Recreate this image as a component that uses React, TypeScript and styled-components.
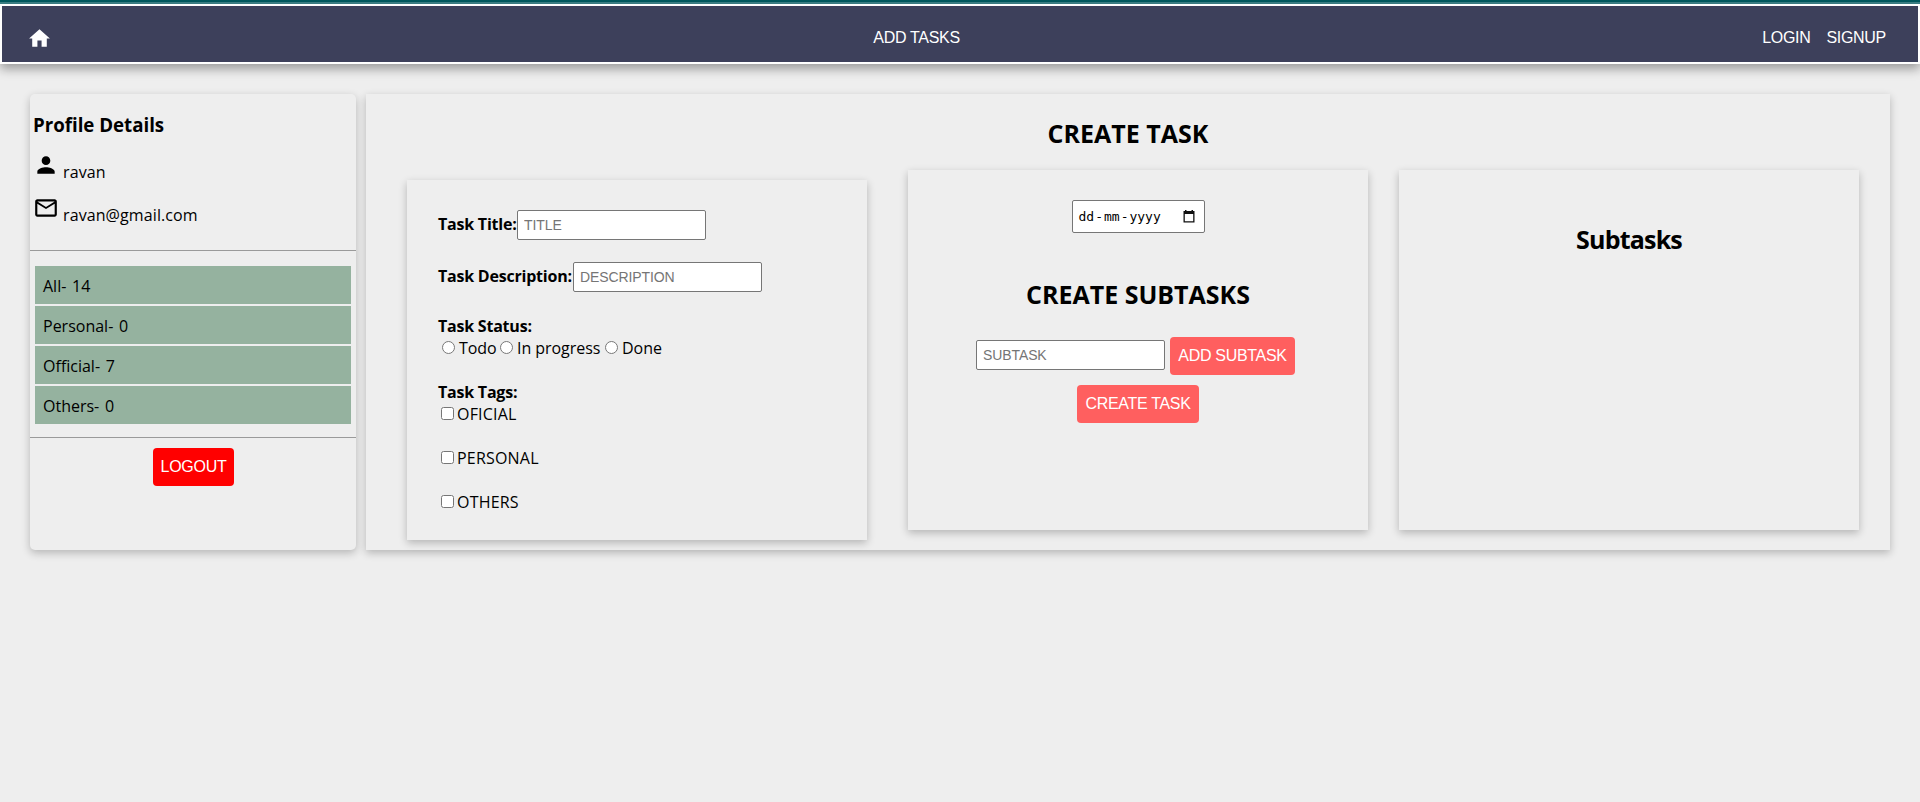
import React from "react";
import styled, { createGlobalStyle, css } from "styled-components";
import { MdHome, MdPerson, MdMailOutline } from "react-icons/md";

const Global = createGlobalStyle`
  * { box-sizing: border-box; }
  body {
    margin: 0;
    min-height: 100vh;
    background: #eeeeee;
    color: #000;
    font-family: "Open Sans", "Noto Sans", sans-serif;
    font-size: 16px;
    font-weight: 400;
    line-height: 22px;
  }
`;

const arial = css`
  font-family: "Liberation Sans", Arial, sans-serif;
  font-weight: 400;
`;

const elevation = css`
  box-shadow: rgba(0, 0, 0, 0.24) 0 3px 8px;
`;

const TopStrip = styled.div`
  height: 4px;
  background: #005a5f;
  border-bottom: 2px solid #3d8287;
`;

const NavBar = styled.nav`
  ${arial}
  display: flex;
  justify-content: space-between;
  align-items: flex-start;
  height: 60px;
  padding: 20px 32px 0 25px;
  border: 2px solid #fff;
  background: #3d405b;
  color: #fff;
  font-size: 16px;
  line-height: 24px;
  letter-spacing: -0.3px;
  box-shadow: rgba(0, 0, 0, 0.35) 0 5px 10px;
`;

const HomeLink = styled.span`
  width: 44px;
  height: 25px;
  svg { display: block; }
`;

const NavLink = styled.span`
  color: #fff;
`;

const NavGroup = styled.div`
  display: flex;
  gap: 16px;
`;

const Page = styled.main`
  display: flex;
  gap: 10px;
  padding: 30px 30px 0;
`;

const Sidebar = styled.aside`
  ${elevation}
  display: flex;
  flex-direction: column;
  width: 326px;
  height: 456px;
  padding-top: 18px;
  border-radius: 5px;
`;

const SidebarTitle = styled.h3`
  margin: 0 0 15px 3px;
  font-size: 18.72px;
  line-height: 25px;
  letter-spacing: -0.02px;
`;

const ProfileRow = styled.div`
  display: flex;
  align-items: flex-start;
  gap: 4px;
  height: 31px;
  margin: 0 0 12px 3px;
  letter-spacing: 0.1px;
  span { padding-top: 9px; }
`;

const Rule = styled.div<{ $top: number }>`
  height: 1px;
  margin-top: ${(p) => p.$top}px;
  background: #9a9a9a;
`;

const CountList = styled.ul`
  display: flex;
  flex-direction: column;
  gap: 2px;
  margin: 15px 5px 0;
  padding: 0;
  list-style: none;
`;

const CountItem = styled.li`
  height: 38px;
  padding: 9px 8px;
  background: #95b29f;
  word-spacing: 1.5px;
`;

const Button = styled.button<{ $bg: string; $width: number }>`
  ${arial}
  width: ${(p) => p.$width}px;
  height: 38px;
  padding: 0;
  border: 0;
  border-radius: 4px;
  background: ${(p) => p.$bg};
  color: #fff;
  font-size: 16px;
  letter-spacing: -0.3px;
`;

const LogoutButton = styled(Button)`
  align-self: center;
  margin: 10px 0 0 1px;
`;

const Board = styled.section`
  ${elevation}
  width: 1524px;
  height: 456px;
  padding-top: 24px;
`;

const Heading = styled.h2<{ $spacing?: number; $top?: number }>`
  margin: ${(p) => p.$top ?? 0}px 0 2px;
  font-size: 25px;
  line-height: 30px;
  text-align: center;
  letter-spacing: ${(p) => p.$spacing ?? 0}px;
`;

const Panels = styled.div`
  display: flex;
  align-items: flex-start;
  padding: 20px 31px 0 41px;
`;

const Panel = styled.div<{ $top?: number; $gap?: number }>`
  ${elevation}
  width: 460px;
  height: 360px;
  margin: ${(p) => p.$top ?? 0}px ${(p) => p.$gap ?? 0}px 0 0;
  padding: 30px 31px 0;
`;

const CenterPanel = styled(Panel)`
  display: flex;
  flex-direction: column;
  align-items: center;
`;

const Field = styled.label`
  display: flex;
  align-items: flex-start;
  height: 30px;
  margin-bottom: 22px;
`;

const Label = styled.div<{ $width?: number }>`
  width: ${(p) => (p.$width ? p.$width + "px" : "auto")};
  height: 22px;
  padding-top: ${(p) => (p.$width ? 3 : 1)}px;
  font-weight: 700;
  letter-spacing: -0.22px;
  white-space: nowrap;
`;

const TextInput = styled.input`
  ${arial}
  width: 189px;
  height: 30px;
  padding: 0 6px;
  border: 1px solid #767676;
  border-radius: 2px;
  background: #fff;
  font-size: 14px;
  letter-spacing: -0.1px;
  &::placeholder { color: #757575; opacity: 1; }
`;

const StatusRow = styled.div`
  display: flex;
  align-items: center;
  height: 22px;
  margin-bottom: 22px;
`;

const Option = styled.label<{ $width?: number }>`
  display: flex;
  align-items: center;
  gap: 3px;
  height: 22px;
  width: ${(p) => (p.$width ? p.$width + "px" : "auto")};
  white-space: nowrap;
  input { flex: none; width: 13px; height: 13px; margin: 0 0 0 3px; }
  span { padding-top: 2px; }
`;

const RadioOption = styled(Option)`
  gap: 4px;
  letter-spacing: -0.05px;
  input { margin-left: 4px; }
`;

const TagList = styled.div`
  display: flex;
  flex-direction: column;
  gap: 22px;
  letter-spacing: 0.2px;
`;

const DateBox = styled.div`
  display: flex;
  align-items: center;
  justify-content: space-between;
  width: 133px;
  height: 33px;
  padding: 0 9px 0 6px;
  margin-bottom: 46px;
  border: 1px solid #767676;
  border-radius: 2px;
  background: #fff;
  font-family: "DejaVu Sans Mono", monospace;
  font-size: 13px;
`;

const DateText = styled.span`
  display: flex;
  gap: 1px;
`;

const SubtaskRow = styled.div`
  display: flex;
  align-items: flex-start;
  gap: 5px;
  margin: 26px 0 10px;
  padding-right: 5px;
  input { margin-top: 3px; }
`;

const CalendarIcon = () => (
  <svg width="12" height="13" viewBox="0 0 12 13">
    <path d="M2 0h1.5v1h5V0H10v1h1.5v11.5H.5V1H2zM1.8 4v7.2h8.4V4z" fill="#111" fillRule="evenodd" />
  </svg>
);

const counts = [
  ["All", 14],
  ["Personal", 0],
  ["Official", 7],
  ["Others", 0],
] as const;

const statuses = [
  { name: "Todo", width: 58 },
  { name: "In progress", width: 105 },
  { name: "Done", width: 60 },
];

const tags = ["OFICIAL", "PERSONAL", "OTHERS"];

export default function App() {
  return (
    <>
      <Global />
      <TopStrip />
      <NavBar>
        <HomeLink>
          <MdHome size={25} />
        </HomeLink>
        <NavLink>ADD TASKS</NavLink>
        <NavGroup>
          <NavLink>LOGIN</NavLink>
          <NavLink>SIGNUP</NavLink>
        </NavGroup>
      </NavBar>
      <Page>
        <Sidebar>
          <SidebarTitle>Profile Details</SidebarTitle>
          <ProfileRow>
            <MdPerson size={26} />
            <span>ravan</span>
          </ProfileRow>
          <ProfileRow>
            <MdMailOutline size={26} />
            <span>ravan@gmail.com</span>
          </ProfileRow>
          <Rule $top={12} />
          <CountList>
            {counts.map(([name, n]) => (
              <CountItem key={name}>{`${name}- ${n}`}</CountItem>
            ))}
          </CountList>
          <Rule $top={13} />
          <LogoutButton $bg="#ff0000" $width={81}>LOGOUT</LogoutButton>
        </Sidebar>
        <Board>
          <Heading>CREATE TASK</Heading>
          <Panels>
            <Panel $top={10} $gap={41}>
              <Field>
                <Label $width={79}>Task Title:</Label>
                <TextInput placeholder="TITLE" />
              </Field>
              <Field>
                <Label $width={135}>Task Description:</Label>
                <TextInput placeholder="DESCRIPTION" />
              </Field>
              <Label>Task Status:</Label>
              <StatusRow>
                {statuses.map((s) => (
                  <RadioOption key={s.name} $width={s.width}>
                    <input type="radio" name="status" />
                    <span>{s.name}</span>
                  </RadioOption>
                ))}
              </StatusRow>
              <Label>Task Tags:</Label>
              <TagList>
                {tags.map((t) => (
                  <Option key={t}>
                    <input type="checkbox" />
                    <span>{t}</span>
                  </Option>
                ))}
              </TagList>
            </Panel>
            <CenterPanel $gap={31}>
              <DateBox>
                <DateText>
                  <span>dd</span>
                  <span>-</span>
                  <span>mm</span>
                  <span>-</span>
                  <span>yyyy</span>
                </DateText>
                <CalendarIcon />
              </DateBox>
              <Heading>CREATE SUBTASKS</Heading>
              <SubtaskRow>
                <TextInput placeholder="SUBTASK" />
                <Button $bg="#ff5f5f" $width={125}>ADD SUBTASK</Button>
              </SubtaskRow>
              <Button $bg="#ff5f5f" $width={122}>CREATE TASK</Button>
            </CenterPanel>
            <CenterPanel>
              <Heading $top={24} $spacing={-0.8}>Subtasks</Heading>
            </CenterPanel>
          </Panels>
        </Board>
      </Page>
    </>
  );
}
